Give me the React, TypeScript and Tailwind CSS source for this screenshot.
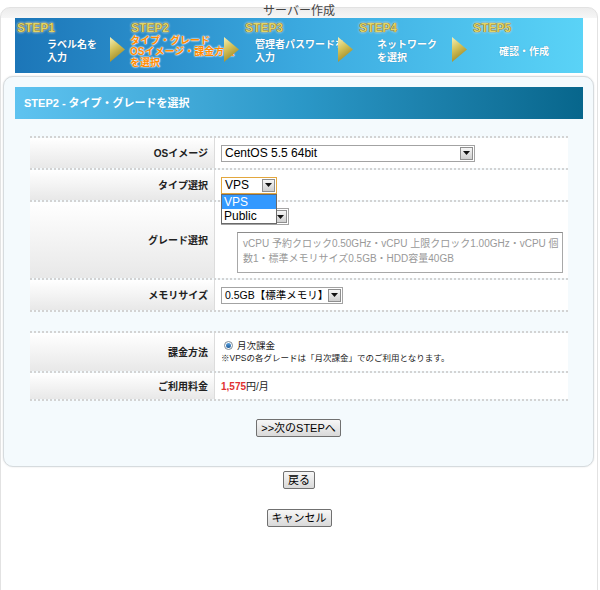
import React from "react";

const steps = [
  { label: "STEP1", lines: ["ラベル名を", "入力"], indent: "pl-[32px]", w: "w-[114px]" },
  { label: "STEP2", lines: ["タイプ・グレード", "OSイメージ・課金方法", "を選択"], indent: "pl-[1px]", w: "w-[114px]", active: true },
  { label: "STEP3", lines: ["管理者パスワードを", "入力"], indent: "pl-[12px]", w: "w-[114px]" },
  { label: "STEP4", lines: ["ネットワーク", "を選択"], indent: "pl-[20px]", w: "w-[114px]" },
  { label: "STEP5", lines: ["確認・作成"], indent: "pl-[28px]", w: "w-[112px]", last: true },
];

function StepArrow() {
  return (
    <svg width="15" height="25" viewBox="0 0 15 25" className="absolute right-[4px] top-[19px] z-10">
      <defs>
        <linearGradient id="arr" x1="0" y1="0" x2="0.4" y2="1">
          <stop offset="0" stopColor="#f6f1b8" />
          <stop offset="0.5" stopColor="#d2c057" />
          <stop offset="1" stopColor="#9c8826" />
        </linearGradient>
      </defs>
      <polygon points="0,0 15,12.5 0,25" fill="url(#arr)" />
    </svg>
  );
}

function Select({ value, className, focus, textSize = "text-[12px]" }: { value: string; className: string; focus?: boolean; textSize?: string }) {
  return (
    <div
      className={`flex h-[17px] items-stretch bg-white border ${focus ? "border-[#e3a73e]" : "border-[#a3a3a3]"} ${className}`}
    >
      <span className={`flex-1 overflow-hidden whitespace-nowrap pl-[3px] ${textSize} leading-[15px] text-black`}>{value}</span>
      <span className="m-[1px] flex w-[13px] shrink-0 items-center justify-center border border-[#8f8f8f] bg-linear-to-b from-[#f6f6f6] to-[#cfcfcf]">
        <svg width="7" height="4" viewBox="0 0 7 4">
          <polygon points="0,0 7,0 3.5,4" fill="#111" />
        </svg>
      </span>
    </div>
  );
}

function Row({ label, h, last, children }: { label: string; h: string; last?: boolean; children: React.ReactNode }) {
  return (
    <div className={`flex border-t-2 border-dotted border-[#d3d3d3] ${last ? "border-b-2" : ""}`}>
      <div
        className={`flex w-[185px] ${h} items-center justify-end border-r border-[#dcdcdc] bg-linear-to-b from-white to-[#e8e8e8] pr-[6px] text-[10px] font-bold text-[#222]`}
      >
        {label}
      </div>
      <div className="relative flex flex-1 bg-white pl-[6px]">{children}</div>
    </div>
  );
}

function OldButton({ children }: { children: React.ReactNode }) {
  return (
    <button className="h-[18px] whitespace-nowrap rounded-[2px] border border-[#707070] bg-linear-to-b from-[#f7f7f7] to-[#d9d9d9] px-[4px] text-[11px] leading-[16px] text-black">
      {children}
    </button>
  );
}

export default function App() {
  return (
    <div className="h-[590px] w-[600px] overflow-hidden bg-white font-['Liberation_Sans','Noto_Sans_CJK_JP',sans-serif]">
      <div className="mt-[7px] h-[600px] w-[598px] rounded-t-[10px] border border-[#e2e2e2] bg-[linear-gradient(#ececec,#f6f6f6_10px,#ffffff_10px)]">
        <div className="relative -top-[2px] h-[10px] text-center text-[12px] leading-[10px] text-[#444]">サーバー作成</div>

        {/* step bar */}
        <div className="ml-[14px] flex h-[55px] w-[568px] bg-linear-to-r from-[#1c76b8] via-[#3ba9df] to-[#5ad3f7]">
          {steps.map((s) => (
            <div key={s.label} className={`relative flex flex-col ${s.w}`}>
              <div className="h-[17px] pl-[2px] pt-[3px] text-[12px] font-bold leading-[14px] text-[#e2d56a] [text-shadow:0_0_1px_#4a3d00,0_0_1px_#4a3d00,0_0_2px_#fff,0_0_3px_#fff]">
                {s.label}
              </div>
              <div className={`flex h-[32px] flex-col justify-center ${s.indent}`}>
                {s.lines.map((l) => (
                  <div
                    key={l}
                    className={`whitespace-nowrap text-[10px] font-bold ${
                      s.active
                        ? "leading-[11px] text-[#ff8a00] [text-shadow:0_0_2px_#fff,0_0_2px_#fff,0_0_1px_#fff]"
                        : "leading-[13px] text-white [text-shadow:0_0_1px_rgba(0,40,80,0.4)]"
                    }`}
                  >
                    {l}
                  </div>
                ))}
              </div>
              {!s.last && <StepArrow />}
            </div>
          ))}
        </div>

        {/* main panel */}
        <div className="ml-[2px] mt-[3px] w-[591px] rounded-[10px] border border-[#d6dbde] bg-[#f4fafd] pb-[29px] pt-[10px] shadow-[0_0_2px_rgba(0,0,0,0.12)]">
          <div className="ml-[11px] flex h-[32px] w-[568px] items-center bg-linear-to-r from-[#5ec3f0] via-[#2b98c8] to-[#07668c] pl-[9px] text-[11px] font-bold text-white">
            STEP2 - タイプ・グレードを選択
          </div>

          <div className="ml-[26px] mt-[17px] w-[538px]">
            <Row label="OSイメージ" h="h-[30px]">
              <div className="flex items-center">
                <Select value="CentOS 5.5 64bit" className="w-[254px]" />
              </div>
            </Row>
            <Row label="タイプ選択" h="h-[30px]">
              <div className="relative z-20 flex items-center">
                <div className="relative">
                  <Select value="VPS" className="w-[56px]" focus />
                  <div className="absolute left-0 top-[17px] w-[56px] border border-[#6a6a6a] bg-white text-[12px] leading-[14px]">
                    <div className="bg-[#3399ff] pl-[2px] text-white">VPS</div>
                    <div className="pl-[2px] text-black">Public</div>
                  </div>
                </div>
              </div>
            </Row>
            <Row label="グレード選択" h="h-[76px]">
              <div className="flex flex-col pt-[6px]">
                <Select value="" className="w-[68px]" />
                <div className="ml-[16px] mt-[7px] h-[41px] w-[326px] whitespace-nowrap border border-[#a8a8a8] border-t-[#8c8c8c] bg-white pl-[5px] pt-[3px] text-[10px] leading-[15px] text-[#999]">
                  vCPU 予約クロック0.50GHz・vCPU 上限クロック1.00GHz・vCPU 個
                  <br />
                  数1・標準メモリサイズ0.5GB・HDD容量40GB
                </div>
              </div>
            </Row>
            <Row label="メモリサイズ" h="h-[30px]" last>
              <div className="flex items-center">
                <Select value="0.5GB【標準メモリ】" className="w-[122px]" textSize="text-[10.5px]" />
              </div>
            </Row>
          </div>

          <div className="ml-[26px] mt-[19px] w-[538px]">
            <Row label="課金方法" h="h-[38px]">
              <div className="flex flex-col justify-center">
                <div className="flex items-center pl-[3px]">
                  <span className="flex h-[9px] w-[9px] items-center justify-center rounded-full border border-[#7d8c99] bg-white">
                    <span className="h-[5px] w-[5px] rounded-full bg-linear-to-b from-[#5aa2e0] to-[#1a5a9a]" />
                  </span>
                  <span className="ml-[4px] text-[9.5px] leading-[13px] text-[#222]">月次課金</span>
                </div>
                <div className="whitespace-nowrap text-[8.5px] leading-[13px] text-[#222]">
                  ※VPSの各グレードは「月次課金」でのご利用となります。
                </div>
              </div>
            </Row>
            <Row label="ご利用料金" h="h-[26px]" last>
              <div className="flex items-center text-[10px] text-[#222]">
                <span className="font-bold text-[#e03131]">1,575</span>
                <span>円/月</span>
              </div>
            </Row>
          </div>

          <div className="mt-[18px] flex justify-center">
            <OldButton>&gt;&gt;次のSTEPへ</OldButton>
          </div>
        </div>

        <div className="mt-[4px] flex justify-center">
          <OldButton>戻る</OldButton>
        </div>
        <div className="mt-[20px] flex justify-center">
          <OldButton>キャンセル</OldButton>
        </div>
      </div>
    </div>
  );
}
